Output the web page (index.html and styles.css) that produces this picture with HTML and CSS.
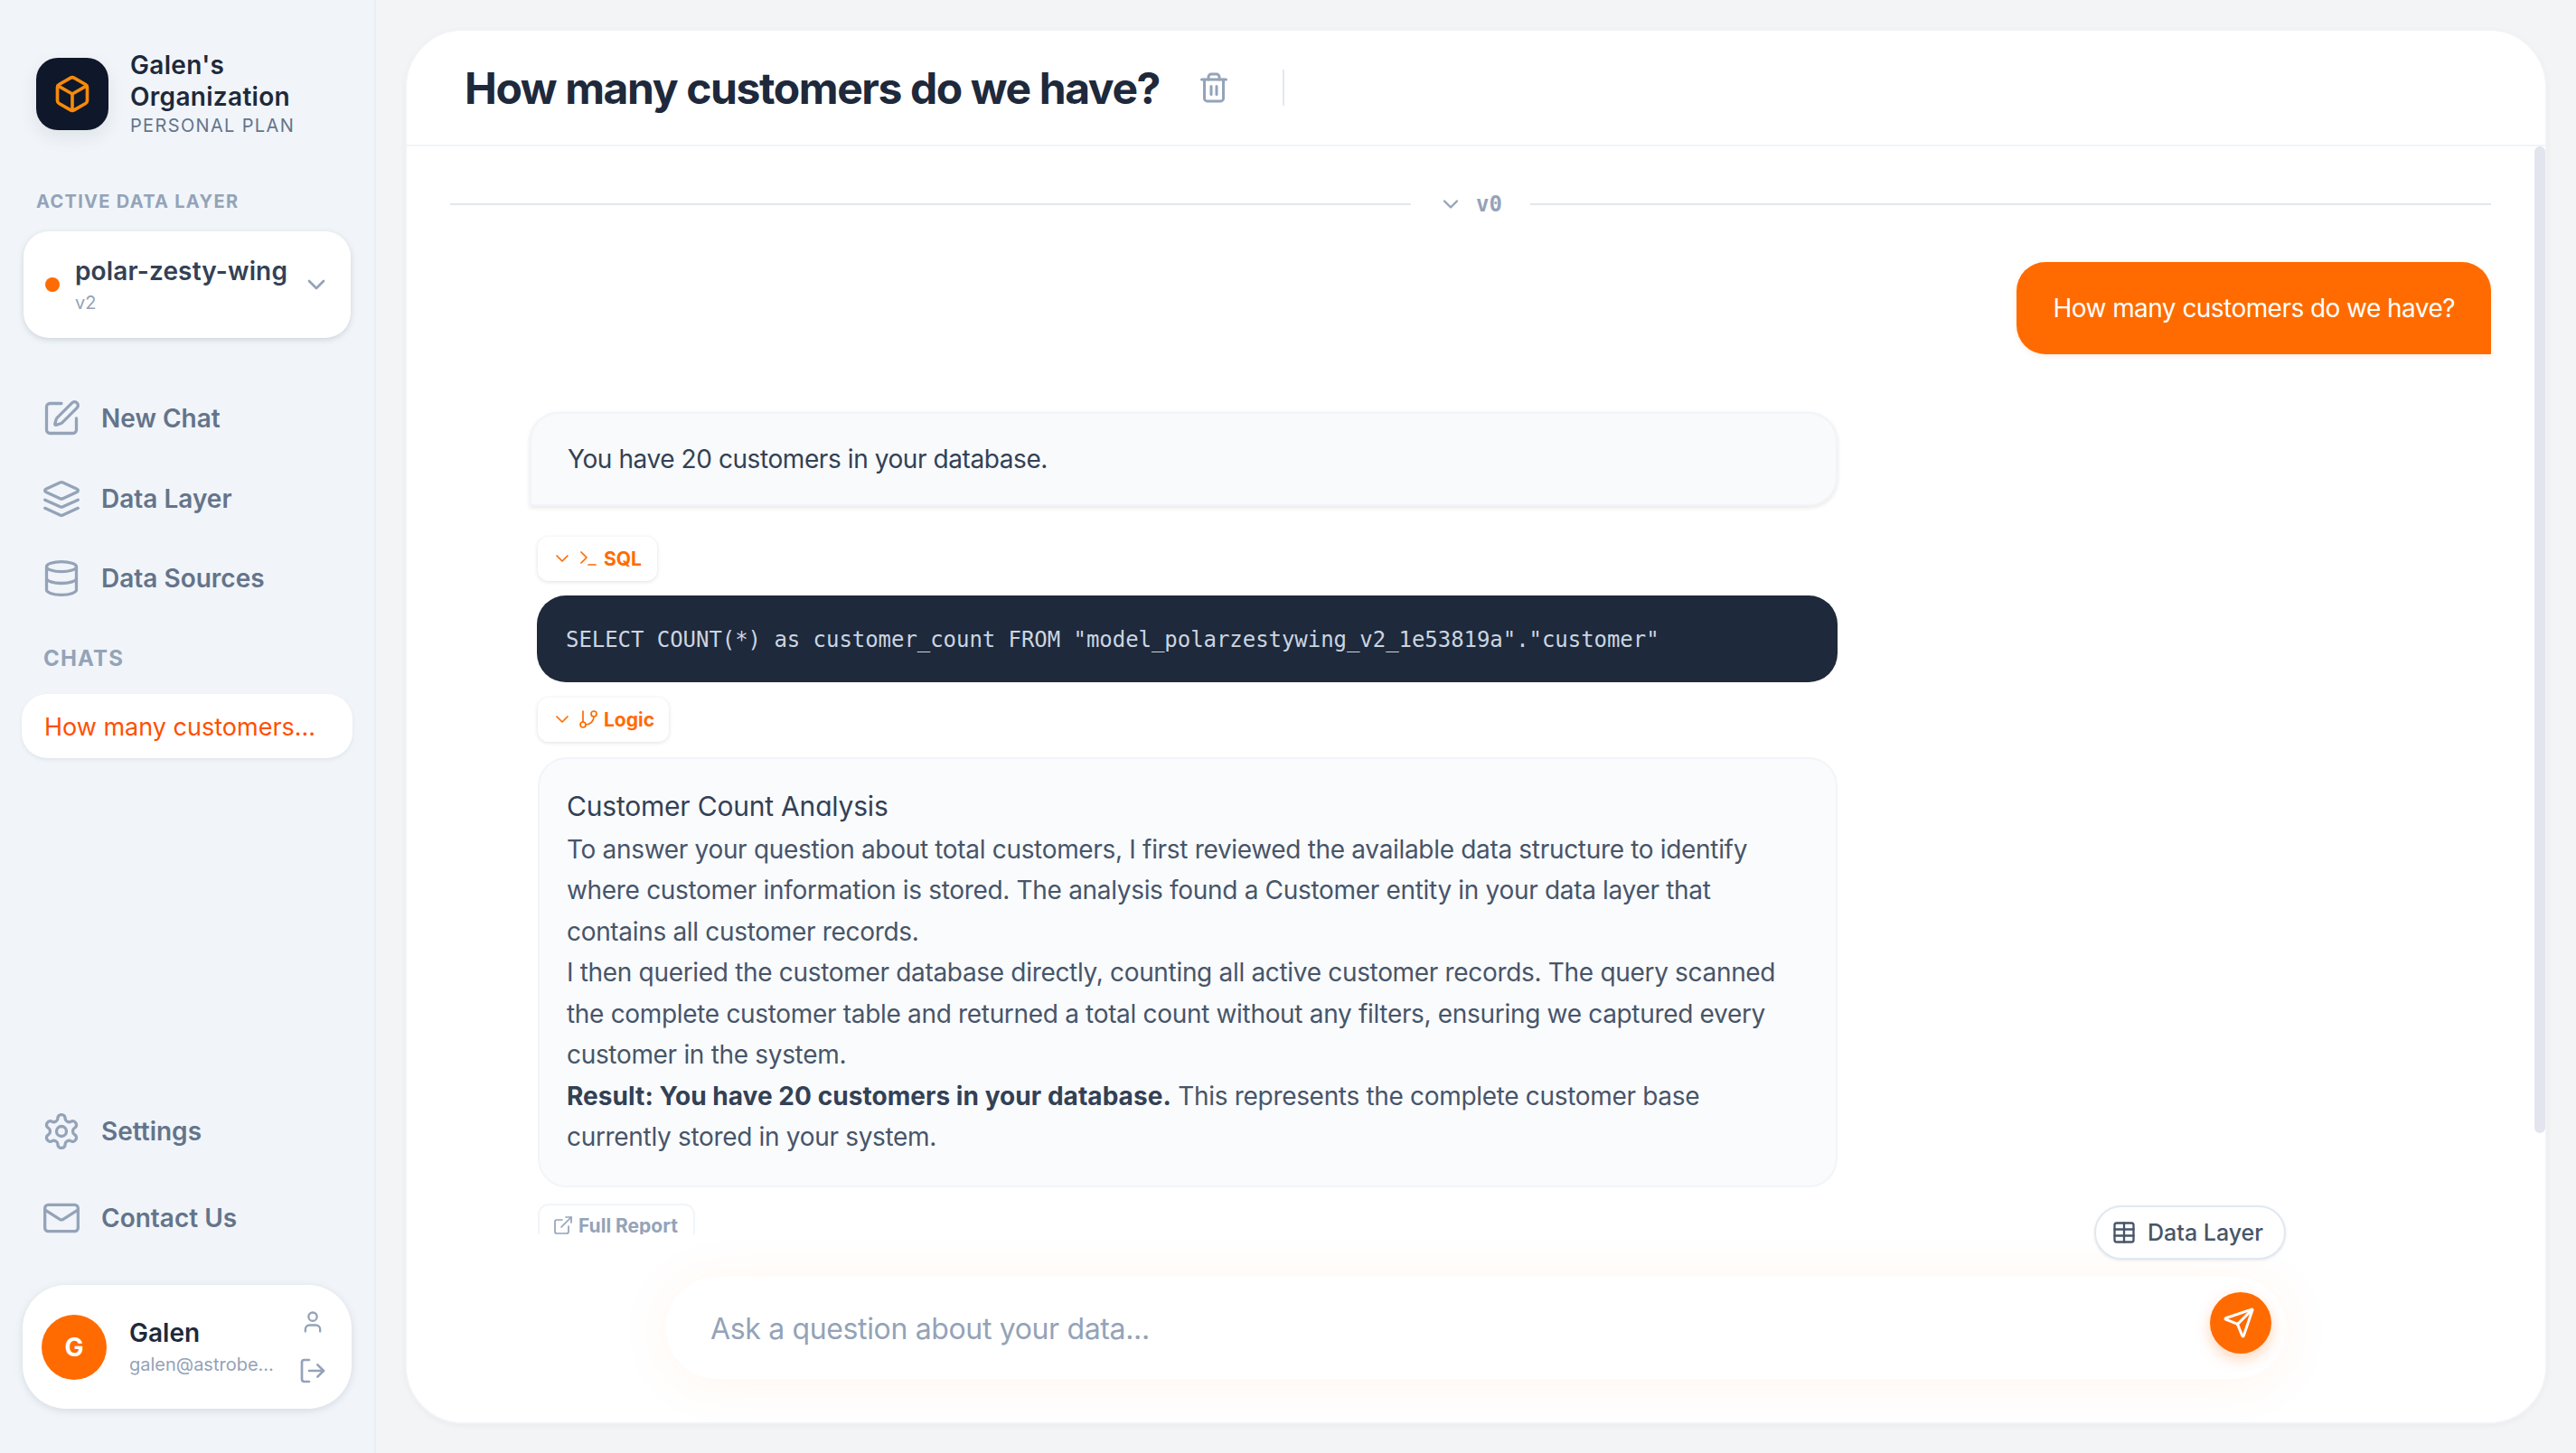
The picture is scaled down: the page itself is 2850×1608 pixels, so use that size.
FILE: index.html
```html
<!DOCTYPE html>
<html lang="en">
<head>
    <meta charset="UTF-8">
    <title>How many customers do we have?</title>
    <link rel="stylesheet" href="styles.css">
</head>
<body>
    <aside class="sidebar">
        <div class="org">
            <div class="org-logo">
                <svg class="icon" width="44" height="44" viewBox="0 0 24 24"><path d="M21 8a2 2 0 0 0-1-1.73l-7-4a2 2 0 0 0-2 0l-7 4A2 2 0 0 0 3 8v8a2 2 0 0 0 1 1.73l7 4a2 2 0 0 0 2 0l7-4A2 2 0 0 0 21 16Z"/><path d="m3.3 7 8.7 5 8.7-5"/><path d="M12 22V12"/></svg>
            </div>
            <div class="org-text">
                <div class="org-name">Galen's Organization</div>
                <div class="org-plan">PERSONAL PLAN</div>
            </div>
        </div>

        <div class="side-label">ACTIVE DATA LAYER</div>
        <div class="layer-card">
            <span class="layer-dot"></span>
            <div>
                <div class="layer-name">polar-zesty-wing</div>
                <div class="layer-version">v2</div>
            </div>
            <svg class="icon layer-chevron" width="32" height="32" viewBox="0 0 24 24"><path d="m6 9 6 6 6-6"/></svg>
        </div>

        <nav class="nav">
            <a class="nav-item">
                <svg class="icon" width="44" height="44" viewBox="0 0 24 24"><path d="M12 3H5a2 2 0 0 0-2 2v14a2 2 0 0 0 2 2h14a2 2 0 0 0 2-2v-7"/><path d="M18.375 2.625a1 1 0 0 1 3 3l-9.013 9.014a2 2 0 0 1-.853.505l-2.873.84a.5.5 0 0 1-.62-.62l.84-2.873a2 2 0 0 1 .506-.852z"/></svg>
                New Chat
            </a>
            <a class="nav-item">
                <svg class="icon" width="44" height="44" viewBox="0 0 24 24"><path d="M12.83 2.18a2 2 0 0 0-1.66 0L2.6 6.08a1 1 0 0 0 0 1.83l8.58 3.91a2 2 0 0 0 1.66 0l8.58-3.9a1 1 0 0 0 0-1.83Z"/><path d="m22 17.65-9.17 4.16a2 2 0 0 1-1.66 0L2 17.65"/><path d="m22 12.65-9.17 4.16a2 2 0 0 1-1.66 0L2 12.65"/></svg>
                Data Layer
            </a>
            <a class="nav-item">
                <svg class="icon" width="44" height="44" viewBox="0 0 24 24"><ellipse cx="12" cy="5" rx="9" ry="3"/><path d="M3 5V19A9 3 0 0 0 21 19V5"/><path d="M3 12A9 3 0 0 0 21 12"/></svg>
                Data Sources
            </a>
        </nav>

        <div class="chats-label">CHATS</div>
        <div class="chat-item">How many customers...</div>

        <div class="side-bottom">
            <a class="nav-item nav-item-tall">
                <svg class="icon" width="44" height="44" viewBox="0 0 24 24"><path d="M12.22 2h-.44a2 2 0 0 0-2 2v.18a2 2 0 0 1-1 1.73l-.43.25a2 2 0 0 1-2 0l-.15-.08a2 2 0 0 0-2.73.73l-.22.38a2 2 0 0 0 .73 2.73l.15.1a2 2 0 0 1 1 1.72v.51a2 2 0 0 1-1 1.74l-.15.09a2 2 0 0 0-.73 2.73l.22.38a2 2 0 0 0 2.73.73l.15-.08a2 2 0 0 1 2 0l.43.25a2 2 0 0 1 1 1.73V20a2 2 0 0 0 2 2h.44a2 2 0 0 0 2-2v-.18a2 2 0 0 1 1-1.73l.43-.25a2 2 0 0 1 2 0l.15.08a2 2 0 0 0 2.73-.73l.22-.39a2 2 0 0 0-.73-2.73l-.15-.08a2 2 0 0 1-1-1.74v-.5a2 2 0 0 1 1-1.74l.15-.09a2 2 0 0 0 .73-2.73l-.22-.38a2 2 0 0 0-2.73-.73l-.15.08a2 2 0 0 1-2 0l-.43-.25a2 2 0 0 1-1-1.73V4a2 2 0 0 0-2-2z"/><circle cx="12" cy="12" r="3"/></svg>
                Settings
            </a>
            <a class="nav-item nav-item-tall">
                <svg class="icon" width="44" height="44" viewBox="0 0 24 24"><rect x="2" y="4" width="20" height="16" rx="2"/><path d="m22 7-8.97 5.7a1.94 1.94 0 0 1-2.06 0L2 7"/></svg>
                Contact Us
            </a>
            <div class="user-card">
                <div class="avatar">G</div>
                <div class="user-text">
                    <div class="user-name">Galen</div>
                    <div class="user-email">galen@astrobe...</div>
                </div>
                <div class="user-actions">
                    <svg class="icon" width="28" height="28" viewBox="0 0 24 24"><path d="M19 21v-2a4 4 0 0 0-4-4H9a4 4 0 0 0-4 4v2"/><circle cx="12" cy="7" r="4"/></svg>
                    <svg class="icon" width="32" height="32" viewBox="0 0 24 24"><path d="M9 21H5a2 2 0 0 1-2-2V5a2 2 0 0 1 2-2h4"/><polyline points="16 17 21 12 16 7"/><line x1="21" y1="12" x2="9" y2="12"/></svg>
                </div>
            </div>
        </div>
    </aside>

    <main class="main">
        <div class="chat-card">
            <header class="chat-header">
                <h1 class="chat-title">How many customers do we have?</h1>
                <svg class="icon trash" width="36" height="36" viewBox="0 0 24 24"><path d="M3 6h18"/><path d="M19 6v14c0 1-1 2-2 2H7c-1 0-2-1-2-2V6"/><path d="M8 6V4c0-1 1-2 2-2h4c1 0 2 1 2 2v2"/><line x1="10" y1="11" x2="10" y2="17"/><line x1="14" y1="11" x2="14" y2="17"/></svg>
                <span class="header-rule"></span>
            </header>

            <div class="messages">
                <div class="version-row">
                    <span class="version-line"></span>
                    <svg class="icon" width="28" height="28" viewBox="0 0 24 24"><path d="m6 9 6 6 6-6"/></svg>
                    <span class="version-text">v0</span>
                    <span class="version-line"></span>
                </div>

                <div class="user-bubble">How many customers do we have?</div>

                <div class="bot-block">
                    <div class="bot-bubble">You have 20 customers in your database.</div>

                    <div class="toggle toggle-sql">
                        <svg class="icon" width="24" height="24" viewBox="0 0 24 24"><path d="m6 9 6 6 6-6"/></svg>
                        <svg class="icon" width="24" height="24" viewBox="0 0 24 24"><polyline points="4 17 10 11 4 5"/><line x1="12" y1="19" x2="20" y2="19"/></svg>
                        SQL
                    </div>
                    <pre class="code-block">SELECT COUNT(*) as customer_count FROM "model_polarzestywing_v2_1e53819a"."customer"</pre>

                    <div class="toggle toggle-logic">
                        <svg class="icon" width="24" height="24" viewBox="0 0 24 24"><path d="m6 9 6 6 6-6"/></svg>
                        <svg class="icon" width="24" height="24" viewBox="0 0 24 24"><line x1="6" y1="3" x2="6" y2="15"/><circle cx="18" cy="6" r="3"/><circle cx="6" cy="18" r="3"/><path d="M18 9a9 9 0 0 1-9 9"/></svg>
                        Logic
                    </div>
                    <div class="logic-panel">
                        <h3 class="logic-title">Customer Count Analysis</h3>
                        <p>To answer your question about total customers, I first reviewed the available data structure to identify where customer information is stored. The analysis found a Customer entity in your data layer that contains all customer records.</p>
                        <p>I then queried the customer database directly, counting all active customer records. The query scanned the complete customer table and returned a total count without any filters, ensuring we captured every customer in the system.</p>
                        <p><strong>Result: You have 20 customers in your database.</strong> This represents the complete customer base currently stored in your system.</p>
                    </div>

                    <div class="toggle toggle-report">
                        <svg class="icon" width="24" height="24" viewBox="0 0 24 24"><path d="M15 3h6v6"/><path d="M10 14 21 3"/><path d="M18 13v6a2 2 0 0 1-2 2H5a2 2 0 0 1-2-2V8a2 2 0 0 1 2-2h6"/></svg>
                        Full Report
                    </div>
                </div>
            </div>
            <div class="scroll-thumb"></div>

            <div class="composer">
                <button class="layer-pill">
                    <svg class="icon" width="28" height="28" viewBox="0 0 24 24"><path d="M12 3v18"/><rect x="3" y="3" width="18" height="18" rx="2"/><path d="M3 9h18"/><path d="M3 15h18"/></svg>
                    Data Layer
                </button>
                <div class="composer-box">
                    <input class="composer-input" type="text" placeholder="Ask a question about your data...">
                    <button class="send-button">
                        <svg class="icon" width="36" height="36" viewBox="0 0 24 24"><path d="M14.536 21.686a.5.5 0 0 0 .937-.024l6.5-19a.496.496 0 0 0-.635-.635l-19 6.5a.5.5 0 0 0-.024.937l7.93 3.18a2 2 0 0 1 1.112 1.11z"/><path d="m21.854 2.147-10.94 10.939"/></svg>
                    </button>
                </div>
            </div>
        </div>
    </main>
</body>
</html>
```

FILE: styles.css
```css
* {
    box-sizing: border-box;
}

body {
    margin: 0;
    height: 100vh;
    display: flex;
    overflow: hidden;
    font-family: 'Inter', 'Liberation Sans', sans-serif;
    background-color: #f3f4f6;
    color: #334155;
}

.icon {
    flex: none;
    fill: none;
    stroke: currentColor;
    stroke-width: 2;
    stroke-linecap: round;
    stroke-linejoin: round;
}

/* sidebar */
.sidebar {
    width: 416px;
    flex: none;
    display: flex;
    flex-direction: column;
    background-color: #f1f5f9;
    border-right: 2px solid #e9eff7;
}

.org {
    display: flex;
    align-items: center;
    gap: 24px;
    padding: 55px 20px 0 40px;
}

.org-logo {
    width: 80px;
    height: 80px;
    flex: none;
    display: flex;
    align-items: center;
    justify-content: center;
    border-radius: 24px;
    background-color: #0f172a;
    color: #f58a0b;
    box-shadow: 0 8px 20px rgba(15, 23, 42, 0.08);
}

.org-name {
    font-size: 28px;
    line-height: 35px;
    font-weight: 600;
    letter-spacing: 0.3px;
    color: #1e293b;
}

.org-plan {
    font-size: 20px;
    line-height: 28px;
    letter-spacing: 1.35px;
    color: #64748b;
}

.side-label {
    margin: 56px 0 0 40px;
    font-size: 20px;
    line-height: 28px;
    font-weight: 700;
    letter-spacing: 1.3px;
    color: #94a3b8;
}

.layer-card {
    display: flex;
    align-items: center;
    width: 362px;
    height: 118px;
    margin: 19px 0 0 26px;
    padding: 0 22px 0 24px;
    border-radius: 28px;
    background-color: #fff;
    box-shadow: 0 2px 6px rgba(100, 116, 139, 0.25);
}

.layer-dot {
    width: 16px;
    height: 16px;
    margin-right: 17px;
    border-radius: 50%;
    background-color: #ff6b00;
}

.layer-name {
    font-size: 28px;
    line-height: 40px;
    font-weight: 600;
    letter-spacing: 0.15px;
    color: #334155;
}

.layer-version {
    font-size: 20px;
    line-height: 30px;
    color: #94a3b8;
}

.layer-chevron {
    margin-left: auto;
    color: #94a3b8;
}

.nav {
    margin-top: 45px;
}

.nav-item {
    display: flex;
    align-items: center;
    gap: 22px;
    height: 88.5px;
    padding-left: 46px;
    font-size: 28px;
    font-weight: 600;
    color: #64748b;
}

.nav-item .icon {
    color: #94a3b8;
    stroke-width: 1.8;
}

.nav-item-tall {
    height: 96px;
}

.chats-label {
    margin: 28px 0 0 48px;
    font-size: 24px;
    line-height: 32px;
    font-weight: 700;
    letter-spacing: 1.2px;
    color: #94a3b8;
}

.chat-item {
    width: 366px;
    height: 71px;
    margin: 23px 0 0 24px;
    padding-left: 25px;
    border-radius: 28px;
    background-color: #fff;
    box-shadow: 0 2px 4px rgba(100, 116, 139, 0.12);
    font-size: 27px;
    line-height: 73px;
    color: #ff4f00;
}

.side-bottom {
    margin-top: auto;
    padding-bottom: 49px;
}

.user-card {
    display: flex;
    align-items: center;
    width: 364px;
    height: 137px;
    margin: 26px 0 0 25px;
    padding: 0 27px 0 21px;
    border-radius: 48px;
    background-color: #fff;
    box-shadow: 0 2px 8px rgba(100, 116, 139, 0.2);
}

.avatar {
    width: 72px;
    height: 72px;
    flex: none;
    border-radius: 50%;
    background-color: #ff6b00;
    color: #fff;
    font-size: 28px;
    font-weight: 700;
    line-height: 72px;
    text-align: center;
}

.user-text {
    margin: 0 0 1px 25px;
    flex: 1;
    min-width: 0;
}

.user-name {
    font-size: 28px;
    line-height: 40px;
    font-weight: 600;
    color: #1e293b;
}

.user-email {
    font-size: 20px;
    line-height: 30px;
    color: #94a3b8;
    white-space: nowrap;
}

.user-actions {
    display: flex;
    flex-direction: column;
    align-items: center;
    gap: 24px;
    color: #94a3b8;
}

/* main panel */
.main {
    flex: 1;
    min-width: 0;
    padding: 32px;
}

.chat-card {
    position: relative;
    height: 100%;
    display: flex;
    flex-direction: column;
    overflow: hidden;
    border: 2px solid #f1f3f7;
    border-radius: 64px;
    background-color: #fff;
    box-shadow: 0 2px 6px rgba(15, 23, 42, 0.04);
}

.chat-header {
    display: flex;
    align-items: center;
    flex: none;
    height: 128px;
    padding-left: 64px;
    border-bottom: 2px solid #f1f5f9;
}

.chat-title {
    margin: 0;
    font-size: 48px;
    font-weight: 700;
    letter-spacing: -1.4px;
    color: #1e293b;
}

.trash {
    margin-left: 42px;
    color: #94a3b8;
}

.header-rule {
    width: 2px;
    height: 40px;
    margin-left: 58px;
    background-color: #e2e8f0;
}

.messages {
    flex: 1;
    min-height: 0;
    overflow: hidden;
    display: flex;
    flex-direction: column;
    padding: 48px 60px 0 48px;
}

.scroll-thumb {
    position: absolute;
    top: 128px;
    right: 0;
    width: 12px;
    height: 1092px;
    border-radius: 6px;
    background-color: #e2e5ee;
}

.version-row {
    display: flex;
    align-items: center;
    flex: none;
    height: 32px;
    color: #94a3b8;
}

.version-line {
    flex: 1;
    height: 2px;
    background-color: #e2e8f0;
}

.version-row .icon {
    margin-left: 30px;
}

.version-text {
    margin: 0 31px 0 14px;
    font-family: 'DejaVu Sans Mono', monospace;
    font-size: 24px;
    font-weight: 700;
}

.user-bubble {
    align-self: flex-end;
    flex: none;
    margin-top: 48px;
    padding: 29px 40px 27px;
    border-radius: 32px 32px 0 32px;
    background-color: #ff6b00;
    box-shadow: 0 2px 6px rgba(255, 107, 0, 0.12);
    color: #fff;
    font-size: 28px;
    line-height: 45.5px;
    letter-spacing: -0.55px;
}

.bot-block {
    flex: none;
    width: 1447px;
    margin-left: 88px;
    margin-top: 64px;
}

.bot-bubble {
    height: 104px;
    padding: 28px 40px 26px;
    border: 2px solid #f1f5f9;
    border-radius: 32px 32px 32px 0;
    background-color: #f8fafc;
    box-shadow: 0 2px 5px rgba(15, 23, 42, 0.1);
    font-size: 28px;
    line-height: 45.5px;
    letter-spacing: -0.42px;
    color: #334155;
}

.toggle {
    display: flex;
    align-items: center;
    height: 49px;
    margin-left: 9px;
    padding: 0 18px 0 15px;
    border-radius: 12px;
    background-color: #fff;
    box-shadow: 0 1px 4px rgba(100, 116, 139, 0.22);
    font-size: 21px;
    font-weight: 700;
    white-space: nowrap;
    color: #ff6b00;
}

.toggle .icon {
    stroke-width: 1.7;
}

.toggle-sql {
    width: 132px;
    margin-top: 34px;
}

.toggle-logic {
    width: 145px;
    margin-top: 17px;
}

.toggle-sql .icon:nth-child(2),
.toggle-logic .icon:nth-child(2) {
    margin: 0 5px 0 5px;
}

.toggle-report {
    width: 174px;
    margin-top: 18px;
    padding-left: 14px;
    gap: 5px;
    border: 2px solid #f1f5f9;
    box-shadow: none;
    color: #94a3b8;
}

.code-block {
    height: 96px;
    margin: 16px 0 0 8px;
    padding: 33px 32px 31px;
    border-radius: 32px;
    background-color: #1e293b;
    color: #cbd5e1;
    font-family: 'DejaVu Sans Mono', monospace;
    font-size: 24px;
    line-height: 32px;
    letter-spacing: -0.05px;
}

.logic-panel {
    margin: 17px 0 0 9px;
    padding: 27px 60px 30px 30px;
    border: 2px solid #f1f5f9;
    border-radius: 32px;
    background-color: #fafbfd;
    font-size: 28px;
    line-height: 45.5px;
    letter-spacing: -0.32px;
    color: #475569;
}

.logic-panel p {
    margin: 0;
}

.logic-panel strong {
    letter-spacing: 0.05px;
    color: #334155;
}

.logic-title {
    margin: 0;
    font-size: 30px;
    font-weight: 400;
    line-height: 51px;
    letter-spacing: -0.2px;
    font-feature-settings: "cv11";
    color: #334155;
}

/* input at the bottom of the card */
.composer {
    position: relative;
    flex: none;
    height: 208px;
    padding: 47px 287px 48px;
    background-color: #fff;
}

.layer-pill {
    position: absolute;
    top: -32px;
    right: 287px;
    display: flex;
    align-items: center;
    justify-content: center;
    gap: 12px;
    width: 212px;
    height: 60px;
    padding: 0 6px 0 0;
    border: 2px solid #e2e8f0;
    border-radius: 30px;
    background-color: #fff;
    box-shadow: 0 1px 3px rgba(100, 116, 139, 0.15);
    font-family: inherit;
    font-size: 25px;
    font-weight: 500;
    color: #475569;
}

.composer-box {
    display: flex;
    align-items: flex-start;
    height: 113px;
    padding: 17px 16px 0 49px;
    border-radius: 56px;
    background-color: #fff;
    box-shadow: 0 4px 60px rgba(255, 107, 0, 0.07);
}

.composer-input {
    flex: 1;
    height: 68px;
    margin-top: 6px;
    padding: 0;
    border: none;
    outline: none;
    background: transparent;
    font-family: inherit;
    font-size: 32px;
    letter-spacing: -0.35px;
    color: #334155;
}

.composer-input::placeholder {
    color: #94a3b8;
    opacity: 1;
}

.send-button {
    display: flex;
    align-items: center;
    justify-content: center;
    flex: none;
    width: 68px;
    height: 68px;
    padding: 0 4px 0 0;
    border: none;
    border-radius: 50%;
    background-color: #ff6b00;
    box-shadow: 0 6px 16px rgba(255, 107, 0, 0.28);
    color: #fff;
}
```
